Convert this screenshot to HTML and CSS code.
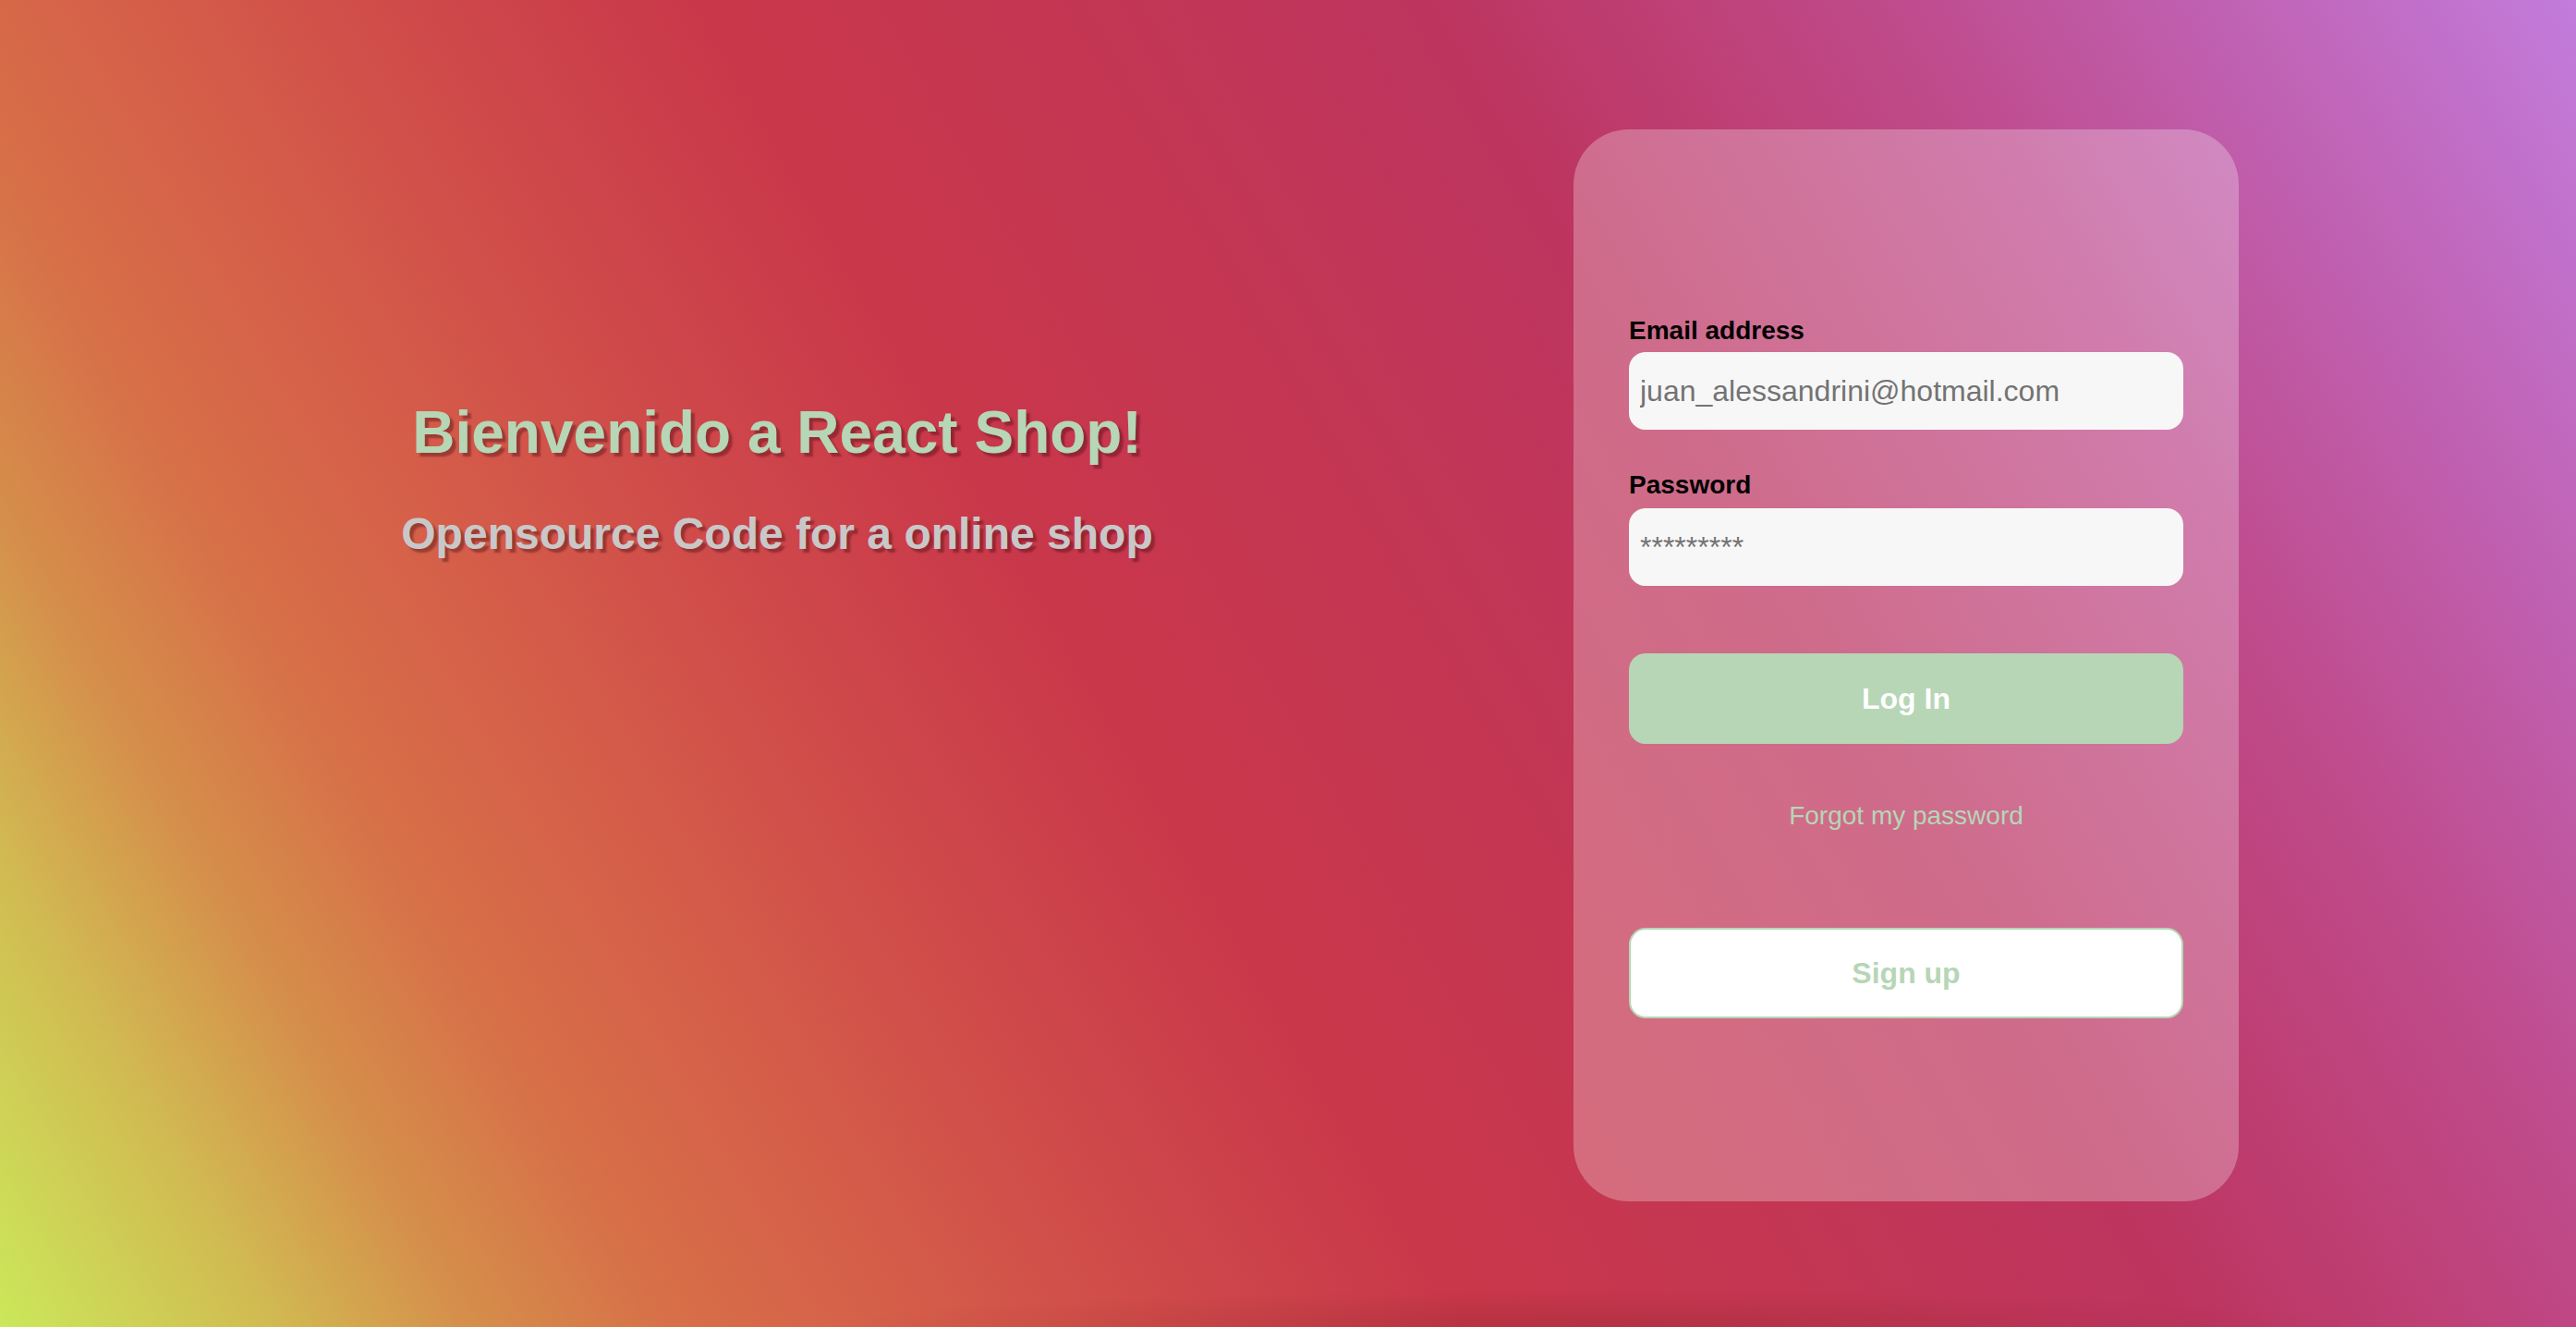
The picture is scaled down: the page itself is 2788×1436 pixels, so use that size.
FILE: index.html
```html
<!DOCTYPE html>
<html lang="es">
<head>
<meta charset="utf-8">
<title>React Shop - Login</title>
<link rel="stylesheet" href="styles.css">
</head>
<body>
<main class="page">
  <section class="welcome">
    <h1 class="welcome-title">Bienvenido a React Shop!</h1>
    <h2 class="welcome-subtitle">Opensource Code for a online shop</h2>
  </section>
  <section class="card">
    <form class="login-form">
      <label class="field-label" for="email">Email address</label>
      <input class="field-input" id="email" type="email" value="juan_alessandrini@hotmail.com">
      <label class="field-label field-label-second" for="password">Password</label>
      <input class="field-input" id="password" type="text" value="*********">
      <button class="btn btn-login" type="button">Log In</button>
      <a class="forgot-link" href="#">Forgot my password</a>
      <button class="btn btn-signup" type="button">Sign up</button>
    </form>
  </section>
</main>
</body>
</html>
```

FILE: styles.css
```css
html, body {
  margin: 0;
  padding: 0;
  height: 100%;
}

body {
  font-family: "Liberation Sans", Arial, Helvetica, sans-serif;
  background:
    radial-gradient(ellipse 30% 40px at 62% 100%, rgba(110, 30, 30, 0.22), rgba(110, 30, 30, 0) 100%),
    linear-gradient(60deg,
      #cbe85a 0%,
      #d1bb52 8%,
      #d58f4b 14%,
      #d77048 20%,
      #d55e49 27%,
      #cf4a4a 35%,
      #c9374a 44%,
      #c43652 54%,
      #bd3560 66%,
      #bf4a8a 79%,
      #c061b2 89%,
      #c27cdc 100%);
  overflow: hidden;
}

.page {
  display: flex;
  align-items: center;
  height: 1436px;
  box-sizing: border-box;
}

.welcome {
  width: 1682px;
  align-self: flex-start;
  padding-top: 430px;
  text-align: center;
}

.welcome-title {
  margin: 0;
  font-size: 64px;
  line-height: 77px;
  font-weight: 700;
  color: #b6d6b5;
  text-shadow: 4px 4px 2px rgba(70, 10, 20, 0.4);
}

.welcome-subtitle {
  margin: 42px 0 0;
  font-size: 48px;
  line-height: 58px;
  font-weight: 700;
  color: #c8c8c8;
  text-shadow: 4px 4px 2px rgba(70, 10, 20, 0.4);
}

.card {
  margin-left: 21px;
  margin-top: 4px;
  width: 720px;
  height: 1160px;
  box-sizing: border-box;
  padding: 202px 60px 198px;
  border-radius: 60px;
  background: rgba(255, 255, 255, 0.27);
}

.login-form {
  display: flex;
  flex-direction: column;
}

.field-label {
  font-size: 28px;
  line-height: 32px;
  font-weight: 700;
  color: #000;
  margin-bottom: 7px;
}

.field-label-second {
  margin-top: 44px;
  margin-bottom: 9px;
}

.field-input {
  height: 84px;
  box-sizing: border-box;
  border: none;
  border-radius: 18px;
  background: #f7f7f7;
  padding: 0 12px;
  font-family: "Liberation Sans", Arial, Helvetica, sans-serif;
  font-size: 32px;
  color: #737373;
  outline: none;
}

.btn {
  height: 98px;
  border-radius: 18px;
  font-family: "Liberation Sans", Arial, Helvetica, sans-serif;
  font-size: 32px;
  font-weight: 700;
  cursor: pointer;
}

.btn-login {
  margin-top: 73px;
  border: none;
  background: #b6d6b6;
  color: #fff;
}

.forgot-link {
  margin-top: 62px;
  font-size: 28px;
  line-height: 32px;
  text-align: center;
  color: #b6d6b6;
  text-decoration: none;
}

.btn-signup {
  margin-top: 105px;
  border: 2px solid #b6d6b6;
  background: #fff;
  color: #b6d6b6;
}
```
